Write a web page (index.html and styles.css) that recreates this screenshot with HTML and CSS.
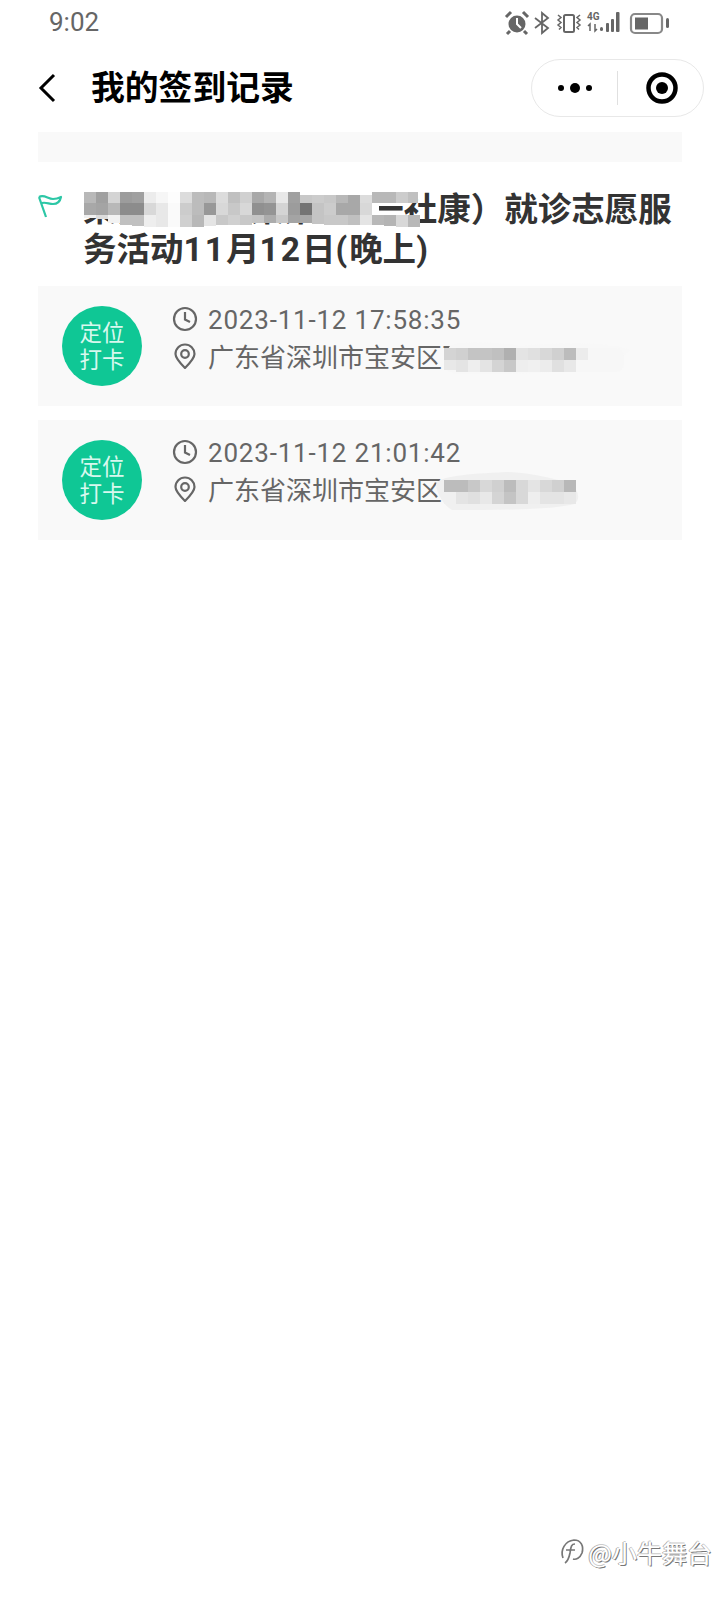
FILE: index.html
```html
<!DOCTYPE html>
<html lang="zh-CN">
<head>
<meta charset="utf-8">
<title>我的签到记录</title>
<link rel="stylesheet" href="styles.css">
</head>
<body>
<div class="page">
  <div class="status">
    <span class="clock-time">9:02</span>
    <svg class="status-icons" width="176" height="30" viewBox="0 0 176 30">
      <circle cx="22" cy="17" r="8.500" fill="#666"/>
      <path d="M11 10l5-5M33 10l-5-5M15 24l-3 3M29 24l3 3" fill="none" stroke="#666" stroke-width="3"/>
      <path d="M22 11v6l4 4" fill="none" stroke="#fff" stroke-width="2"/>
      <path d="M40 11l13 10-6 5V6l6 5-13 10" fill="none" stroke="#666" stroke-width="1.800"/>
      <rect x="69" y="8" width="10" height="17" rx="1.500" fill="none" stroke="#666" stroke-width="2"/>
      <path d="M63 8l3 2.500-3 2.500 3 2.500-3 2.500 3 2.500-2 2M85 8l-3 2.500 3 2.500-3 2.500 3 2.500-3 2.500 2 2" fill="none" stroke="#666" stroke-width="1.500"/>
      <text class="net-label" x="92" y="13">4G</text>
      <path d="M95 24v-7l-2 2M100 17v7l2-2" fill="none" stroke="#666" stroke-width="1.500"/>
      <rect x="105" y="20" width="3" height="4" rx="1.500" fill="#666"/>
      <rect x="111" y="16" width="3" height="9" rx="1" fill="#666"/>
      <rect x="116" y="12" width="3" height="13" rx="1" fill="#666"/>
      <rect x="121" y="5" width="3.500" height="20" rx="1" fill="#666"/>
      <rect x="136" y="7" width="31" height="19" rx="4" fill="none" stroke="#888" stroke-width="2.200"/>
      <rect x="140" y="10.500" width="13" height="12" fill="#666"/>
      <rect x="171" y="11" width="3" height="10" rx="1.500" fill="#666"/>
    </svg>
  </div>

  <div class="nav">
    <svg class="back" width="18" height="30" viewBox="0 0 18 30"><path d="M16 2L3 15l13 13" fill="none" stroke="#000" stroke-width="3"/></svg>
    <h1 class="nav-title">我的签到记录</h1>
    <div class="capsule">
      <div class="capsule-half">
        <svg width="34" height="12" viewBox="0 0 34 12"><circle cx="3" cy="6" r="3"/><circle cx="17" cy="6" r="5"/><circle cx="31" cy="6" r="3"/></svg>
      </div>
      <div class="capsule-line"></div>
      <div class="capsule-half capsule-half-end">
        <svg width="32" height="32" viewBox="0 0 32 32"><circle cx="16" cy="16" r="13.500" fill="none" stroke="#000" stroke-width="4.500"/><circle cx="16" cy="16" r="6"/></svg>
      </div>
    </div>
  </div>

  <div class="bar"></div>

  <div class="heading">
    <h2 class="heading-text">某某某某某某某1某一社康）就诊志愿服务活动<span class="num">11</span>月<span class="num">12</span>日<span class="num">(</span>晚上<span class="num">)</span></h2>
    <svg class="mosaic mosaic-title" width="380" height="50" viewBox="0 0 380 50">
      <path d="M4 4H335V30H4z" fill="#fff"/>
      <g transform="translate(40 4)">
        <rect x="0" width="12" height="11" fill="#b8b8b8"/><rect x="12" width="12" height="11" fill="#a0a0a0"/><rect x="24" width="12" height="11" fill="#d4d4d4"/><rect x="36" width="12" height="11" fill="#9c9c9c"/><rect x="48" width="12" height="11" fill="#a0a0a0"/><rect x="60" width="12" height="11" fill="#ececec"/><rect x="72" width="12" height="11" fill="#f6f6f6"/><rect x="84" width="12" height="11" fill="#fdfdfd"/><rect x="96" width="12" height="11" fill="#dcdcdc"/><rect x="108" width="12" height="11" fill="#bcbcbc"/><rect x="120" width="12" height="11" fill="#b8b8b8"/><rect x="132" width="12" height="11" fill="#dcdcdc"/><rect x="144" width="12" height="11" fill="#c0c0c0"/><rect x="156" width="12" height="11" fill="#d0d0d0"/><rect x="168" width="12" height="11" fill="#a8a8a8"/><rect x="180" width="12" height="11" fill="#b4b4b4"/><rect x="192" width="12" height="11" fill="#e8e8e8"/><rect x="204" width="12" height="11" fill="#a0a0a0"/><rect x="216" y="3" width="12" height="8" fill="#c8c8c8"/><rect x="228" y="3" width="12" height="8" fill="#cccccc"/><rect x="240" y="3" width="12" height="8" fill="#c8c8c8"/><rect x="252" y="3" width="12" height="8" fill="#b8b8b8"/><rect x="264" y="3" width="12" height="8" fill="#a8a8a8"/><rect x="276" y="3" width="12" height="8" fill="#dcdcdc"/><rect x="288" width="12" height="11" fill="#b8b8b8"/><rect x="300" width="12" height="11" fill="#b8b8b8"/><rect x="312" width="12" height="11" fill="#cccccc"/><rect x="324" width="10" height="11" fill="#c0c0c0"/>

        <rect x="0" y="11" width="12" height="12" fill="#a8a8a8"/><rect x="12" y="11" width="12" height="12" fill="#a4a4a4"/><rect x="24" y="11" width="12" height="12" fill="#b8b8b8"/><rect x="36" y="11" width="12" height="12" fill="#8c8c8c"/><rect x="48" y="11" width="12" height="12" fill="#8c8c8c"/><rect x="60" y="11" width="12" height="12" fill="#d8d8d8"/><rect x="72" y="11" width="12" height="12" fill="#e8e8e8"/><rect x="84" y="11" width="12" height="12" fill="#fafafa"/><rect x="96" y="11" width="12" height="12" fill="#cccccc"/><rect x="108" y="11" width="12" height="12" fill="#bcbcbc"/><rect x="120" y="11" width="12" height="12" fill="#989898"/><rect x="132" y="11" width="12" height="12" fill="#d8d8d8"/><rect x="144" y="11" width="12" height="12" fill="#c8c8c8"/><rect x="156" y="11" width="12" height="12" fill="#d8d8d8"/><rect x="168" y="11" width="12" height="12" fill="#909090"/><rect x="180" y="11" width="12" height="12" fill="#949494"/><rect x="192" y="11" width="12" height="12" fill="#d4d4d4"/><rect x="204" y="11" width="12" height="12" fill="#9c9c9c"/><rect x="216" y="11" width="12" height="12" fill="#747474"/><rect x="228" y="11" width="12" height="12" fill="#c4c4c4"/><rect x="240" y="11" width="12" height="12" fill="#cccccc"/><rect x="252" y="11" width="12" height="12" fill="#a8a8a8"/><rect x="264" y="11" width="12" height="12" fill="#a8a8a8"/><rect x="276" y="11" width="12" height="12" fill="#d8d8d8"/>

        <rect x="0" y="23" width="12" height="3" fill="#f0f0f0"/><rect x="12" y="23" width="12" height="4" fill="#dcdcdc"/><rect x="24" y="23" width="12" height="8" fill="#f2f2f2"/><rect x="36" y="23" width="12" height="10" fill="#c0c0c0"/><rect x="48" y="23" width="12" height="11" fill="#c0c0c0"/><rect x="60" y="23" width="12" height="12" fill="#eeeeee"/><rect x="72" y="23" width="12" height="12" fill="#e8e8e8"/><rect x="84" y="23" width="12" height="12" fill="#fafafa"/><rect x="96" y="23" width="12" height="12" fill="#d0d0d0"/><rect x="108" y="23" width="12" height="12" fill="#b8b8b8"/><rect x="120" y="23" width="12" height="11" fill="#e4e4e4"/><rect x="132" y="23" width="12" height="10" fill="#c8c8c8"/><rect x="144" y="23" width="12" height="10" fill="#d0d0d0"/><rect x="156" y="23" width="12" height="10" fill="#c8c8c8"/><rect x="168" y="23" width="12" height="8" fill="#c4c4c4"/><rect x="180" y="23" width="12" height="8" fill="#acacac"/><rect x="192" y="23" width="12" height="8" fill="#c8c8c8"/><rect x="204" y="23" width="12" height="8" fill="#a4a4a4"/><rect x="216" y="23" width="12" height="8" fill="#a8a8a8"/><rect x="228" y="23" width="12" height="9" fill="#c4c4c4"/><rect x="240" y="23" width="12" height="10" fill="#c8c8c8"/><rect x="252" y="23" width="12" height="10" fill="#c8c8c8"/><rect x="264" y="23" width="12" height="10" fill="#c0c0c0"/><rect x="276" y="23" width="12" height="10" fill="#e4e4e4"/><rect x="288" y="23" width="12" height="10" fill="#b8b8b8"/><rect x="300" y="23" width="12" height="11" fill="#b4b4b4"/><rect x="312" y="23" width="12" height="12" fill="#d8d8d8"/><rect x="324" y="23" width="12" height="12" fill="#b8b8b8"/>
      </g>
    </svg>
    <svg class="flag" width="26" height="28" viewBox="0 0 26 28"><path d="M1 6c5-3 9 2 14 2 3 0 6-1 8-2-1 5-4 7-8 7-4 0-7-2-11-1M1 6l7 20" fill="none" stroke="#2cc7a6" stroke-width="2.200" stroke-linejoin="round"/></svg>
  </div>

  <div class="card card-first">
    <div class="badge">定位<br>打卡</div>
    <div class="info">
      <div class="info-row">
        <svg class="info-icon" width="26" height="26" viewBox="0 0 26 26"><circle cx="13" cy="13" r="11" fill="none" stroke="#666" stroke-width="2.200"/><path d="M13 6v7.500l5 2.500" fill="none" stroke="#666" stroke-width="2.200"/></svg>
        <span class="info-time">2023-11-12 17:58:35</span>
      </div>
      <div class="info-row">
        <svg class="info-icon" width="26" height="26" viewBox="0 0 26 26"><path d="M13 25c-6-6-9.500-10-9.500-14a9.500 9.500 0 0 1 19 0c0 4-3.500 8-9.500 14z" fill="none" stroke="#666" stroke-width="2.200"/><circle cx="13" cy="11" r="3.800" fill="none" stroke="#666" stroke-width="2.200"/></svg>
        <span>广东省深圳市宝安区西</span>
      </div>
    </div>
    <svg class="mosaic mosaic-one" width="190" height="48" viewBox="0 0 190 48">
      <path d="M6 10c10-6 50-4 70 0 40-4 90-4 110 4-10 14-60 24-130 24H10C2 36 2 14 6 10z" fill="#f8f8f8"/>
      <rect x="0" y="12" width="180" height="24" rx="8" fill="#f7f7f7"/>
      <rect x="0" y="12" width="12" height="12" fill="#d4d4d4"/><rect x="12" y="12" width="12" height="12" fill="#d0d0d0"/><rect x="24" y="12" width="12" height="12" fill="#c4c4c4"/><rect x="36" y="12" width="12" height="12" fill="#c4c4c4"/><rect x="48" y="12" width="12" height="12" fill="#c0c0c0"/><rect x="60" y="12" width="12" height="12" fill="#b0b0b0"/><rect x="72" y="12" width="12" height="12" fill="#e4e4e4"/><rect x="84" y="12" width="12" height="12" fill="#e0e0e0"/><rect x="96" y="12" width="12" height="12" fill="#d8d8d8"/><rect x="108" y="12" width="12" height="12" fill="#d0d0d0"/><rect x="120" y="12" width="12" height="12" fill="#bcbcbc"/><rect x="132" y="12" width="12" height="12" fill="#ececec"/>
      <rect x="0" y="24" width="12" height="10" fill="#e8e8e8"/><rect x="12" y="24" width="12" height="12" fill="#e4e4e4"/><rect x="24" y="24" width="12" height="12" fill="#eeeeee"/><rect x="36" y="24" width="12" height="12" fill="#e4e4e4"/><rect x="48" y="24" width="12" height="12" fill="#d4d4d4"/><rect x="60" y="24" width="12" height="12" fill="#c8c8c8"/><rect x="72" y="24" width="12" height="12" fill="#eeeeee"/><rect x="84" y="24" width="12" height="12" fill="#f0f0f0"/><rect x="96" y="24" width="12" height="12" fill="#ececec"/><rect x="108" y="24" width="12" height="12" fill="#e0e0e0"/><rect x="120" y="24" width="12" height="12" fill="#e8e8e8"/>
    </svg>
  </div>

  <div class="card card-second">
    <div class="badge">定位<br>打卡</div>
    <div class="info">
      <div class="info-row">
        <svg class="info-icon" width="26" height="26" viewBox="0 0 26 26"><circle cx="13" cy="13" r="11" fill="none" stroke="#666" stroke-width="2.200"/><path d="M13 6v7.500l5 2.500" fill="none" stroke="#666" stroke-width="2.200"/></svg>
        <span class="info-time">2023-11-12 21:01:42</span>
      </div>
      <div class="info-row">
        <svg class="info-icon" width="26" height="26" viewBox="0 0 26 26"><path d="M13 25c-6-6-9.500-10-9.500-14a9.500 9.500 0 0 1 19 0c0 4-3.500 8-9.500 14z" fill="none" stroke="#666" stroke-width="2.200"/><circle cx="13" cy="11" r="3.800" fill="none" stroke="#666" stroke-width="2.200"/></svg>
        <span>广东省深圳市宝安区西</span>
      </div>
    </div>
    <svg class="mosaic mosaic-two" width="150" height="48" viewBox="0 0 150 48">
      <path d="M0 16C4 8 30 6 70 4c20 0 45 6 60 10 12 4 16 18 8 22-20 6-78 6-122 6C8 38 0 24 0 16z" fill="#f0f0f0"/>
      <rect x="8" y="12" width="12" height="12" fill="#bcbcbc"/><rect x="20" y="12" width="12" height="12" fill="#bcbcbc"/><rect x="32" y="12" width="12" height="12" fill="#c8c8c8"/><rect x="44" y="12" width="12" height="12" fill="#d8d8d8"/><rect x="56" y="12" width="12" height="12" fill="#d0d0d0"/><rect x="68" y="12" width="12" height="12" fill="#bcbcbc"/><rect x="80" y="12" width="12" height="12" fill="#d8d8d8"/><rect x="92" y="12" width="12" height="12" fill="#e4e4e4"/><rect x="104" y="12" width="12" height="12" fill="#d8d8d8"/><rect x="116" y="12" width="12" height="12" fill="#d0d0d0"/><rect x="128" y="12" width="12" height="12" fill="#b8b8b8"/>
      <rect x="8" y="24" width="12" height="12" fill="#f0f0f0"/><rect x="20" y="24" width="12" height="12" fill="#e4e4e4"/><rect x="32" y="24" width="12" height="12" fill="#e0e0e0"/><rect x="44" y="24" width="12" height="12" fill="#e8e8e8"/><rect x="56" y="24" width="12" height="12" fill="#d4d4d4"/><rect x="68" y="24" width="12" height="12" fill="#c4c4c4"/><rect x="80" y="24" width="12" height="12" fill="#d8d8d8"/><rect x="92" y="24" width="12" height="12" fill="#eeeeee"/><rect x="104" y="24" width="12" height="12" fill="#e4e4e4"/><rect x="116" y="24" width="12" height="12" fill="#e4e4e4"/><rect x="128" y="24" width="12" height="12" fill="#e8e8e8"/>
    </svg>
  </div>

  <div class="watermark">
    <svg width="26" height="30" viewBox="0 0 26 30"><path d="M4 21C1 13 6 4 15 3c7 0 10 6 8 13-2 5-6 7-9 6M16 7c-4 0-4 3-5 9-1 5-2 8-5 10M7 13h9" fill="none" stroke="#777" stroke-width="1.700"/></svg>
    <span class="watermark-text">@小牛舞台</span>
  </div>
</div>
</body>
</html>
```

FILE: styles.css
```css
html, body {
  margin: 0;
  padding: 0;
  background: #fff;
}

.page {
  position: relative;
  width: 720px;
  height: 1600px;
  overflow: hidden;
  font-family: "Noto Sans CJK SC", "Noto Sans", sans-serif;
}

.status {
  display: flex;
  align-items: center;
  justify-content: space-between;
  height: 44px;
  padding: 0 49px;
  box-sizing: border-box;
}

.clock-time {
  font-family: Roboto, sans-serif;
  font-size: 26px;
  color: #666;
}

.status-icons {
  flex: none;
}

.net-label {
  font-family: Roboto, sans-serif;
  font-size: 10px;
  font-weight: 700;
  fill: #666;
}

.nav {
  display: flex;
  align-items: center;
  height: 88px;
  padding-left: 38px;
  box-sizing: border-box;
}

.back {
  flex: none;
  margin-right: 35px;
}

.nav-title {
  margin: 0 0 4px;
  flex: 1;
  font-size: 33.800px;
  line-height: 44px;
  font-weight: 700;
  color: #000;
}

.capsule {
  display: flex;
  align-items: center;
  width: 173px;
  height: 58px;
  margin-right: 16px;
  border: 1px solid #e8e8e8;
  border-radius: 29px;
  box-sizing: border-box;
}

.capsule-half {
  flex: none;
  width: 85px;
  display: flex;
  align-items: center;
  justify-content: center;
  box-sizing: border-box;
}

.capsule-half-end {
  padding-left: 3px;
}

.capsule-line {
  flex: none;
  width: 1px;
  height: 34px;
  background: #e0e0e0;
}

.bar {
  height: 30px;
  margin: 0 38px;
  background: #f9f9f9;
}

.heading {
  position: relative;
  padding: 28px 38px 16px 83px;
}

.heading-text {
  margin: 0;
  font-family: Roboto, "Noto Sans CJK SC", sans-serif;
  font-size: 33.500px;
  line-height: 40px;
  font-weight: 700;
  color: #333;
}

.num {
  letter-spacing: 2px;
}

.flag {
  position: absolute;
  left: 38px;
  top: 29px;
}

.mosaic {
  position: absolute;
  filter: blur(0.5px);
}

.mosaic-title {
  left: 44px;
  top: 26px;
}

.card {
  position: relative;
  display: flex;
  align-items: flex-start;
  height: 120px;
  margin: 0 38px 14px;
  padding: 20px 0 0 24px;
  box-sizing: border-box;
  background: #f9f9f9;
}

.badge {
  flex: none;
  width: 80px;
  height: 80px;
  border-radius: 50%;
  background: #0fc795;
  color: #d8f8ee;
  font-size: 22.500px;
  line-height: 27px;
  text-align: center;
  padding-top: 12px;
  box-sizing: border-box;
}

.info {
  margin-left: 30px;
  margin-top: -6px;
  font-size: 26px;
  color: #666;
}

.card-second .info {
  margin-top: -7px;
}

.info-row {
  display: flex;
  align-items: center;
  height: 37px;
  white-space: nowrap;
}

.info-time {
  margin-top: 2px;
  font-family: Roboto, sans-serif;
  letter-spacing: 0.800px;
}

.info-icon {
  flex: none;
  margin-right: 10px;
}

.mosaic-one {
  left: 406px;
  top: 50px;
}

.mosaic-two {
  left: 398px;
  top: 48px;
}

.watermark {
  position: absolute;
  right: 8px;
  bottom: 32px;
  display: flex;
  align-items: center;
  gap: 3px;
}

.watermark-text {
  font-size: 25px;
  line-height: 32px;
  color: #fff;
  text-shadow: -1px 0 0 #aaa, 0 -1px 0 #ccc, 1px 1px 0 #777;
}
```
